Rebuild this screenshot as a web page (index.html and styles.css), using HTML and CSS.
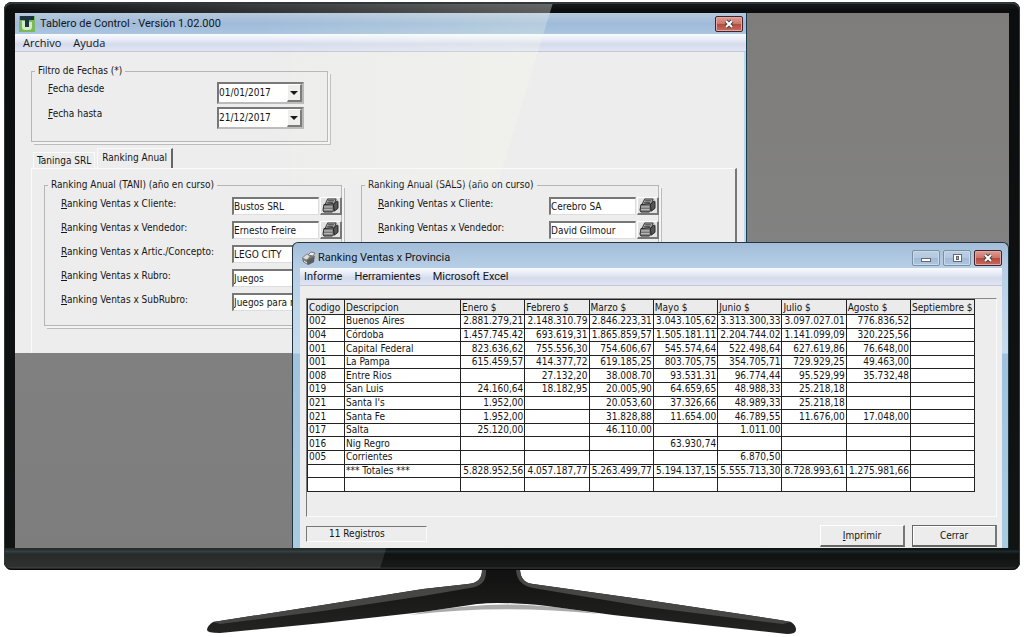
FILE: index.html
```html
<!DOCTYPE html>
<html lang="es">
<head>
<meta charset="utf-8">
<meta name="viewport" content="width=device-width, initial-scale=1">
<title>Tablero de Control</title>
<link rel="stylesheet" href="styles.css">
</head>
<body>
<svg class="symbols" aria-hidden="true">
  <symbol id="printer" viewBox="0 0 18 16">
    <path d="M6 1l9 0-2 6H3z" fill="#aaa" stroke="#333"/>
    <path d="M6.500 3h6M5.500 5h6" stroke="#333"/>
    <path d="M2 7l10-1 1 7-2 2H2l-1-2z" fill="#777" stroke="#222"/>
    <path d="M12 7l4-4 1 1v7l-4 3z" fill="#555" stroke="#222"/>
    <path d="M2 9.500h9M2 12.500h9" stroke="#ccc"/>
  </symbol>
</svg>
<main class="monitor">
  <div class="screen">
    <section class="window window-main" aria-label="Tablero de Control">
      <header class="titlebar">
        <svg class="app-icon" viewBox="0 0 16 16" aria-hidden="true">
          <rect width="16" height="16" fill="#7cb95c"/>
          <path d="M3 5v6q0 3 3 3h4q3 0 3-3V6h-3v5H7V5z" fill="#d4ebc6"/>
          <path d="M1 0h14v4h-5v7H6V4H1z" fill="#1c3442"/>
        </svg>
        <h1 class="title">Tablero de Control - Versión 1.02.000</h1>
        <button class="win-btn win-close" type="button" aria-label="Cerrar ventana"><svg viewBox="0 0 12 10"><path d="M3 2l6 6M9 2l-6 6" stroke="#444" stroke-width="4"/><path d="M3 2l6 6M9 2l-6 6" stroke="#fff" stroke-width="2"/></svg></button>
      </header>
      <nav class="menubar"><a href="#archivo">Archivo</a><a href="#ayuda">Ayuda</a></nav>
      <div class="main-body">
        <fieldset class="group group-dates">
          <legend>Filtro de Fechas (*)</legend>
          <div class="date-grid">
            <label for="desde"><u>F</u>echa desde</label>
            <div class="combo"><select id="desde"><option>01/01/2017</option></select><span class="combo-arrow"></span></div>
            <label for="hasta"><u>F</u>echa hasta</label>
            <div class="combo"><select id="hasta"><option>21/12/2017</option></select><span class="combo-arrow"></span></div>
          </div>
        </fieldset>
        <div class="tabs" role="tablist">
          <button class="tab" type="button" role="tab" aria-selected="false">Taninga SRL</button>
          <button class="tab tab-active" type="button" role="tab" aria-selected="true">Ranking Anual</button>
        </div>
        <div class="panel" role="tabpanel">
          <fieldset class="group">
            <legend>Ranking Anual (TANI) (año en curso)</legend>
            <div class="rank-grid">
              <label for="t1"><u>R</u>anking Ventas x Cliente:</label><input id="t1" value="Bustos SRL"><button class="print-btn" type="button" aria-label="Imprimir cliente"><svg><use href="#printer"/></svg></button>
              <label for="t2"><u>R</u>anking Ventas x Vendedor:</label><input id="t2" value="Ernesto Freire"><button class="print-btn" type="button" aria-label="Imprimir vendedor"><svg><use href="#printer"/></svg></button>
              <label for="t3"><u>R</u>anking Ventas x Artic./Concepto:</label><input id="t3" class="wide" value="LEGO CITY">
              <label for="t4"><u>R</u>anking Ventas x Rubro:</label><input id="t4" class="wide" value="Juegos">
              <label for="t5"><u>R</u>anking Ventas x SubRubro:</label><input id="t5" class="wide" value="Juegos para n">
            </div>
          </fieldset>
          <fieldset class="group">
            <legend>Ranking Anual (SALS) (año on curso)</legend>
            <div class="rank-grid">
              <label for="s1"><u>R</u>anking Ventas x Cliente:</label><input id="s1" value="Cerebro SA"><button class="print-btn" type="button" aria-label="Imprimir cliente"><svg><use href="#printer"/></svg></button>
              <label for="s2"><u>R</u>anking Ventas x Vendedor:</label><input id="s2" value="David Gilmour"><button class="print-btn" type="button" aria-label="Imprimir vendedor"><svg><use href="#printer"/></svg></button>
            </div>
          </fieldset>
        </div>
      </div>
    </section>

    <div class="glare"></div>

    <section class="window window-report" aria-label="Ranking Ventas x Provincia">
      <header class="titlebar">
        <svg class="report-icon" viewBox="0 0 15 14" aria-hidden="true">
          <path d="M1 7l5-4 8 2-1 6-6 3-5-3z" fill="#777"/>
          <path d="M1 7l5-4 4 1-4 5z" fill="#ddd" stroke="#888"/>
          <path d="M7 4l3-3 4 1-2 3z" fill="#eee" stroke="#777"/>
          <path d="M6 9l7-3v5l-6 3z" fill="#5c5c5c"/>
          <path d="M3 10l3 2" stroke="#eee"/>
        </svg>
        <h2 class="title">Ranking Ventas x Provincia</h2>
        <div class="win-btns">
          <button class="win-btn" type="button" aria-label="Minimizar"><svg viewBox="0 0 12 10"><rect x="1.500" y="5.500" width="9" height="3" fill="#fff" stroke="#667"/></svg></button>
          <button class="win-btn" type="button" aria-label="Maximizar"><svg viewBox="0 0 12 10"><rect x="2.500" y="1.500" width="8" height="7" fill="#fff" stroke="#667"/><rect x="5.500" y="3.500" width="2" height="3" fill="#9bb" stroke="#667"/></svg></button>
          <button class="win-btn win-close" type="button" aria-label="Cerrar ventana"><svg viewBox="0 0 12 10"><path d="M3 2l6 6M9 2l-6 6" stroke="#444" stroke-width="4"/><path d="M3 2l6 6M9 2l-6 6" stroke="#fff" stroke-width="2"/></svg></button>
        </div>
      </header>
      <nav class="menubar"><a href="#informe">Informe</a><a href="#herramientas">Herramientes</a><a href="#excel">Microsoft Excel</a></nav>
      <div class="report-body">
        <div class="table-box">
          <table class="report">
            <colgroup><col class="col-code"><col class="col-desc"><col span="8"></colgroup>
            <thead><tr><th>Codigo</th><th>Descripcion</th><th>Enero $</th><th>Febrero $</th><th>Marzo $</th><th>Mayo $</th><th>Junio $</th><th>Julio $</th><th>Agosto $</th><th>Septiembre $</th></tr></thead>
            <tbody>
              <tr><td>002</td><td>Buenos Aires</td><td>2.881.279,21</td><td>2.148.310.79</td><td>2.846.223,31</td><td>3.043.105,62</td><td>3.313.300,33</td><td>3.097.027.01</td><td>776.836,52</td><td></td></tr>
              <tr><td>004</td><td>Córdoba</td><td>1.457.745.42</td><td>693.619,31</td><td>1.865.859,57</td><td>1.505.181.11</td><td>2.204.744.02</td><td>1.141.099,09</td><td>320.225,56</td><td></td></tr>
              <tr><td>001</td><td>Capital Federal</td><td>823.636,62</td><td>755.556,30</td><td>754.606,67</td><td>545.574,64</td><td>522.498,64</td><td>627.619,86</td><td>76.648,00</td><td></td></tr>
              <tr><td>001</td><td>La Pampa</td><td>615.459,57</td><td>414.377,72</td><td>619.185,25</td><td>803.705,75</td><td>354.705,71</td><td>729.929,25</td><td>49.463,00</td><td></td></tr>
              <tr><td>008</td><td>Entre Rios</td><td></td><td>27.132,20</td><td>38.008.70</td><td>93.531.31</td><td>96.774,44</td><td>95.529,99</td><td>35.732,48</td><td></td></tr>
              <tr><td>019</td><td>San Luis</td><td>24.160,64</td><td>18.182,95</td><td>20.005,90</td><td>64.659,65</td><td>48.988,33</td><td>25.218,18</td><td></td><td></td></tr>
              <tr><td>021</td><td>Santa I's</td><td>1.952,00</td><td></td><td>20.053,60</td><td>37.326,66</td><td>48.989,33</td><td>25.218,18</td><td></td><td></td></tr>
              <tr><td>021</td><td>Santa Fe</td><td>1.952,00</td><td></td><td>31.828,88</td><td>11.654.00</td><td>46.789,55</td><td>11.676,00</td><td>17.048,00</td><td></td></tr>
              <tr><td>017</td><td>Salta</td><td>25.120,00</td><td></td><td>46.110.00</td><td></td><td>1.011.00</td><td></td><td></td><td></td></tr>
              <tr><td>016</td><td>Nig Regro</td><td></td><td></td><td></td><td>63.930,74</td><td></td><td></td><td></td><td></td></tr>
              <tr><td>005</td><td>Corrientes</td><td></td><td></td><td></td><td></td><td>6.870,50</td><td></td><td></td><td></td></tr>
              <tr><td></td><td>*** Totales ***</td><td>5.828.952,56</td><td>4.057.187,77</td><td>5.263.499,77</td><td>5.194.137,15</td><td>5.555.713,30</td><td>8.728.993,61</td><td>1.275.981,66</td><td></td></tr>
              <tr><td></td><td></td><td></td><td></td><td></td><td></td><td></td><td></td><td></td><td></td></tr>
            </tbody>
          </table>
        </div>
        <footer class="report-footer">
          <output class="status">11 Registros</output>
          <button class="push" type="button"><u>I</u>mprimir</button>
          <button class="push push-default" type="button">Cerrar</button>
        </footer>
      </div>
    </section>
  </div>
</main>
<svg class="stand" viewBox="0 0 1024 67" aria-hidden="true">
  <defs>
    <linearGradient id="neck" x1="0" x2="0" y1="0" y2="1"><stop offset="0" stop-color="#111"/><stop offset="1" stop-color="#242422"/></linearGradient>
  </defs>
  <path d="M430 41Q500 29 570 39L600 44Q500 34 410 45z" fill="#aaa"/>
  <path d="M482 0Q482 13 468 14L423 19 323 35 213 52Q207 56 207 60 207 63 220 63L323 53 423 42 477 34Q500 31 547 36L613 45 713 56 787 64Q796 64 796 60 796 55 791 52L780 50 647 30 533 14Q521 13 520 0z" fill="url(#neck)"/>
  <path d="M482 0Q482 13 468 14L423 19 323 35 213 52 220 54 323 41 423 26 470 18Q487 16 486 0zM516 0Q517 15 533 18L647 37 783 54 791 52 780 50 647 30 533 14Q521 13 520 0z" fill="#464644"/>
</svg>
</body>
</html>
```
FILE: styles.css
```css
* { box-sizing: border-box; }
body {
  margin: 0;
  background: #fff;
  color: #151515;
  font: 10px/14px "DejaVu Sans Condensed", "Noto Sans", sans-serif;
  overflow-x: hidden;
}
button, input, select { font: inherit; color: inherit; margin: 0; border-radius: 0; }
a { color: inherit; text-decoration: none; }
u { text-underline-offset: 1px; }
.symbols { position: absolute; width: 0; height: 0; }

.monitor {
  margin: 2px 4px 0;
  padding: 11px 11px 22px;
  border-radius: 8px;
  background: linear-gradient(#1b1f20, #0c0d0e 8px, #121313 calc(100% - 20px), #1d3032 calc(100% - 19px), #101212 calc(100% - 16px), #181919 calc(100% - 3px), #333 calc(100% - 2px), #050505);
  box-shadow: inset 0 1px 0 1px #30383a, inset 0 0 0 1px #080808;
  position: relative;
}
.screen { min-height: 535px; background: linear-gradient(#7e7d7b, #828282 45%, #7d7d7d); }
.glare {
  position: absolute;
  inset: 2px 1px 2px 1px;
  clip-path: polygon(0 0, 54% 0, 37% 100%, 0 100%);
  background:
    linear-gradient(90deg, rgba(255,255,255,0), rgba(255,255,255,.34) 54%) 0 0 / 100% 9px no-repeat,
    linear-gradient(90deg, rgba(240,255,220,0) 25%, rgba(250,255,235,.26) 54%) 0 9px / 100% 172px no-repeat,
    linear-gradient(rgba(255,255,255,.1), rgba(255,255,255,.1)) 0 100% / 100% 20px no-repeat;
  pointer-events: none;
}

.window { position: absolute; background: #ededed; }
.window-main { top: 11px; left: 11px; right: 273px; border-right: 1px solid #1b3b4c; box-shadow: inset -2px 0 #b5dbed; }
.window-report {
  left: 288px; right: 11px; bottom: 22px;
  padding: 0 6px 0 7px;
  border: 1px solid #26343e; border-bottom: 0;
  border-radius: 6px 6px 0 0;
  background: linear-gradient(#a3bdda, #b6cfe6 24px, #c6dcef 110px, #9fc3df 111px, #a8cde2);
}
.titlebar { display: flex; align-items: center; gap: 5px; }
.window-main .titlebar { height: 21px; padding: 0 3px 0 4px; background: linear-gradient(#b6c9dd, #9fbbd9 50%, #a9c5e0); }
.window-report .titlebar { height: 25px; padding: 4px 0 0 1px; gap: 2px; }
.title { margin: 0; flex: 1; font: 11px/14px Roboto, "Noto Sans", sans-serif; }
.app-icon { width: 16px; height: 16px; }
.report-icon { width: 15px; height: 14px; }
.win-btns { display: flex; gap: 3px; }
.win-btn {
  display: grid; place-items: center;
  width: 28px; height: 16px; padding: 0;
  border: 1px solid #7a90a6; border-radius: 2px;
  background: linear-gradient(#bccfe3, #b3c8de 50%, #a0b9d5 50%, #aec7e0);
  box-shadow: inset 0 0 0 1px #c9d9ea;
}
.win-btn svg { width: 12px; height: 10px; }
.win-close { border-color: #43222a; background: linear-gradient(#dd9c93, #cc7468 50%, #b2493c 50%, #c96b5f); box-shadow: inset 0 0 0 1px #dfaaa3; }

.menubar {
  display: flex; gap: 12px;
  height: 18px; padding: 1px 8px;
  border-bottom: 1px solid #c3c6d3;
  background: linear-gradient(#fafbfe, #e6eaf6 6px, #d6dbec 10px, #e0e4f3);
  font: 11px/16px "Open Sans", "Noto Sans", sans-serif;
}
.window-report .menubar { padding: 1px 4px; font-family: Roboto, "Noto Sans", sans-serif; }

.main-body { padding: 12px 9px 0 16px; }
.group {
  min-width: 0; margin: 0; padding: 0;
  border: 1px solid #b5b5b5;
  box-shadow: 2px 2px #f4f4f4, 3px 3px #bcbcbc;
}
.group legend { margin-left: 3px; padding: 0 3px; }
.group-dates { width: 297px; }
.date-grid { display: grid; grid-template-columns: 169px 87px; gap: 3px 0; padding: 4px 0 12px 16px; }
.combo { display: grid; height: 22px; border: 2px solid #777; border-right-color: #b5b5b5; border-bottom-color: #bbb; background: #fff; }
.combo select { grid-area: 1 / 1; appearance: none; border: 0; padding: 0; background: none; }
.combo-arrow {
  grid-area: 1 / 1; justify-self: end;
  display: grid; place-items: center;
  width: 15px;
  border: 1px solid #fff; border-right: 2px solid #777; border-bottom: 2px solid #777;
  background: #eee; pointer-events: none;
}
.combo-arrow::after { content: ""; border: 4px solid transparent; border-top-color: #111; border-bottom: 0; }

.tabs { display: flex; align-items: flex-end; gap: 2px; padding: 6px 2px 0; }
.tab { height: 16px; padding: 0 3px; border: 1px solid #fafafa; border-bottom: 0; background: none; line-height: 14px; }
.tab-active { height: 20px; padding: 0 4px 1px 4px; border-right: 2px solid #666; }
.panel {
  display: flex; gap: 19px;
  padding: 9px 12px 27px;
  border: 1px solid #fafafa; border-right: 2px solid #777; border-bottom: 0;
}
.panel .group { flex: 0 0 298px; }
.rank-grid { display: grid; grid-template-columns: 170px 87px 22px; grid-auto-rows: 18px; gap: 6px 1px; padding: 5px 0 14px 16px; }
.rank-grid label { width: 169px; white-space: nowrap; }
.rank-grid input { width: 100%; min-width: 0; height: 18px; padding: 0; border: 1px solid #ddd; border-top: 2px solid #777; border-left: 2px solid #777; background: #fff; }
.rank-grid .wide { grid-column: 2 / 4; }
.print-btn { display: grid; place-items: center; padding: 0; height: 18px; border: 1px solid #fff; border-right: 2px solid #777; border-bottom: 2px solid #777; background: #e3e3e3; }
.print-btn svg { width: 17px; height: 15px; }

.report-body { padding: 12px 5px 1px 6px; background: #ededed; }
.table-box { min-height: 219px; border: 1px solid #fafafa; border-top-color: #888; border-left-color: #777; }
.report {
  width: 97%; height: 193px;
  table-layout: fixed; border-collapse: collapse;
  line-height: 12px;
}
.col-code { width: 37px; }
.col-desc { width: 116px; }
.report th, .report td { height: 13px; padding: 0 1px; border: 1px solid #222; white-space: nowrap; font-weight: 400; }
.report th { height: 15px; padding-top: 2px; text-align: left; background: #ebebeb; }
.report td { text-align: right; background: #fff; }
.report td:nth-child(-n+2) { text-align: left; }
.report-footer { display: flex; align-items: flex-end; gap: 7px; padding-top: 8px; }
.status { align-self: flex-start; width: 121px; height: 16px; margin: 1px auto 0 0; padding-left: 22px; border: 1px solid #fafafa; border-top-color: #777; border-left-color: #777; }
.push { width: 85px; height: 22px; padding: 1px 0 0; border: 1px solid #fff; border-right: 2px solid #777; border-bottom: 2px solid #666; background: #ececec; }
.push-default { border-top-color: #666; border-left-color: #666; box-shadow: inset 1px 1px #fff; }
.stand { display: block; width: 100%; height: auto; }
```
